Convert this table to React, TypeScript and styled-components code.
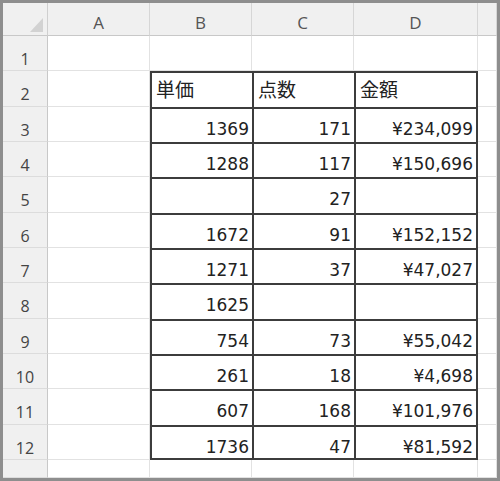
import React from 'react';
import styled, { createGlobalStyle } from 'styled-components';

const Global = createGlobalStyle`
  html, body { margin: 0; padding: 0; background: #ffffff; }
  #root { width: 500px; height: 481px; }
`;

const DARK = '#3c3c3c';
const GRID = '#e2e2e2';
const HEAD_BG = '#f0f0f0';

const Frame = styled.div`
  box-sizing: border-box;
  width: 500px;
  height: 481px;
  border: 3px solid #8e8e8e;
  background: #ffffff;
  overflow: hidden;
`;

const Sheet = styled.div`
  display: grid;
  height: 100%;
  grid-template-columns: 45px 102px 102px 102px 124px 1fr;
  grid-template-rows: 33px repeat(12, minmax(0, 1fr)) 18px;
`;

const Corner = styled.div`
  box-sizing: border-box;
  background: ${HEAD_BG};
  border-right: 1px solid #cfcfcf;
  border-bottom: 1px solid #c8c8c8;
  display: flex;
  justify-content: flex-end;
  align-items: flex-end;
  padding: 0 4px 3px 0;
`;

const ColHead = styled.div`
  box-sizing: border-box;
  background: ${HEAD_BG};
  border-right: 1px solid #d6d6d6;
  border-bottom: 1px solid #c8c8c8;
  display: flex;
  justify-content: center;
  align-items: flex-start;
  padding-top: 10px;
  font-family: 'Open Sans', 'Liberation Sans', sans-serif;
  font-size: 17px;
  line-height: 20px;
  color: #555555;
  overflow: hidden;
`;

const RowHead = styled.div`
  box-sizing: border-box;
  background: ${HEAD_BG};
  border-right: 1px solid #c8c8c8;
  border-bottom: 1px solid #dcdcdc;
  display: flex;
  justify-content: center;
  align-items: flex-start;
  padding-top: 13px;
  font-family: 'Open Sans', 'Liberation Sans', sans-serif;
  font-size: 16px;
  line-height: 20px;
  color: #444444;
  overflow: hidden;
`;

type CellProps = {
  $boxed?: boolean;
  $lastCol?: boolean;
  $lastRow?: boolean;
  $cjk?: boolean;
};

const Cell = styled.div<CellProps>`
  box-sizing: border-box;
  min-width: 0;
  overflow: hidden;
  display: flex;
  align-items: flex-start;
  justify-content: ${(p) => (p.$cjk ? 'flex-start' : 'flex-end')};
  padding: ${(p) => (p.$cjk ? '6px 4px 0 4px' : '10px 3px 0 4px')};
  white-space: nowrap;
  color: #222222;
  font-family: ${(p) =>
    p.$cjk
      ? "'Noto Sans CJK JP', 'DejaVu Sans', sans-serif"
      : "'DejaVu Sans', 'Liberation Sans', sans-serif"};
  font-size: ${(p) => (p.$cjk ? '19px' : '17px')};
  line-height: 20px;
  border-right: 1px solid ${GRID};
  border-bottom: 1px solid ${GRID};
  ${(p) =>
    p.$boxed
      ? `
    border-left: 2px solid ${DARK};
    border-top: 2px solid ${DARK};
    border-right: ${p.$lastCol ? `2px solid ${DARK}` : 'none'};
    border-bottom: ${p.$lastRow ? `2px solid ${DARK}` : 'none'};
  `
      : ''}
`;

const SelectAll = () => (
  <svg width="13" height="14" viewBox="0 0 13 14" aria-hidden="true">
    <polygon points="13,0 13,14 0,14" fill="#d2d2d2" />
  </svg>
);

const columns = ['A', 'B', 'C', 'D', ''];

const table: string[][] = [
  ['単価', '点数', '金額'],
  ['1369', '171', '¥234,099'],
  ['1288', '117', '¥150,696'],
  ['', '27', ''],
  ['1672', '91', '¥152,152'],
  ['1271', '37', '¥47,027'],
  ['1625', '', ''],
  ['754', '73', '¥55,042'],
  ['261', '18', '¥4,698'],
  ['607', '168', '¥101,976'],
  ['1736', '47', '¥81,592'],
];

// Sheet row numbers 1..13; the table occupies rows 2..12, columns B..D (index 1..3)
const rowNumbers = Array.from({ length: 13 }, (_, i) => i + 1);

export default function App() {
  return (
    <>
      <Global />
      <Frame>
        <Sheet>
          <Corner>
            <SelectAll />
          </Corner>
          {columns.map((c, i) => (
            <ColHead key={`h${i}`}>{c}</ColHead>
          ))}
          {rowNumbers.map((r) => {
            const tIndex = r - 2;
            const inTable = tIndex >= 0 && tIndex < table.length;
            return (
              <React.Fragment key={`r${r}`}>
                <RowHead>{r}</RowHead>
                {columns.map((_, ci) => {
                  const tc = ci - 1;
                  const boxed = inTable && tc >= 0 && tc < 3;
                  const value = boxed ? table[tIndex][tc] : '';
                  return (
                    <Cell
                      key={`c${r}-${ci}`}
                      $boxed={boxed}
                      $lastCol={boxed && tc === 2}
                      $lastRow={boxed && tIndex === table.length - 1}
                      $cjk={boxed && tIndex === 0}
                    >
                      {value}
                    </Cell>
                  );
                })}
              </React.Fragment>
            );
          })}
        </Sheet>
      </Frame>
    </>
  );
}
